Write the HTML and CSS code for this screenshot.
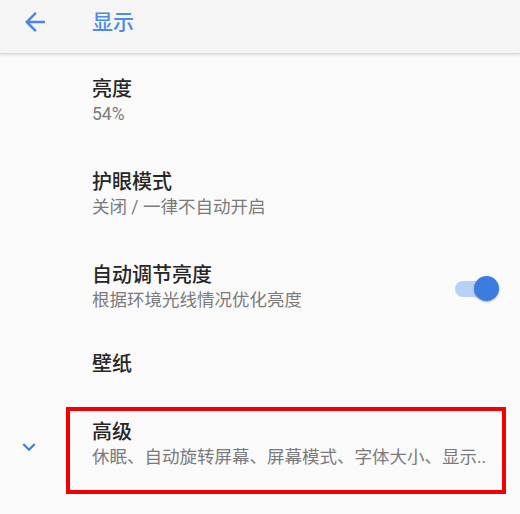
FILE: index.html
```html
<!DOCTYPE html>
<html lang="zh-CN">
<head>
<meta charset="utf-8">
<title>显示</title>
<link rel="stylesheet" href="styles.css">
</head>
<body>
<header class="appbar">
  <svg class="back" viewBox="0 0 24 24" width="30" height="30"><path d="M20 11H7.83l5.59-5.59L12 4l-8 8 8 8 1.41-1.41L7.83 13H20v-2z" fill="currentColor"/></svg>
  <h1 class="appbar-title">显示</h1>
</header>
<main class="list">
  <div class="item">
    <div class="text">
      <div class="title">亮度</div>
      <div class="summary">54%</div>
    </div>
  </div>
  <div class="item">
    <div class="text">
      <div class="title">护眼模式</div>
      <div class="summary">关闭 / 一律不自动开启</div>
    </div>
  </div>
  <div class="item">
    <div class="text">
      <div class="title">自动调节亮度</div>
      <div class="summary">根据环境光线情况优化亮度</div>
    </div>
    <div class="switch"><span class="track"></span><span class="thumb"></span></div>
  </div>
  <div class="item single">
    <div class="text">
      <div class="title">壁纸</div>
    </div>
  </div>
  <div class="item advanced">
    <div class="icon-col">
      <svg class="chevron" viewBox="0 0 24 24" width="26" height="26"><path d="M16.59 8.59L12 13.17 7.41 8.59 6 10l6 6 6-6z" fill="currentColor"/></svg>
    </div>
    <div class="text">
      <div class="title">高级</div>
      <div class="summary">休眠、自动旋转屏幕、屏幕模式、字体大小、显示..</div>
    </div>
    <div class="highlight"></div>
  </div>
</main>
</body>
</html>
```
FILE: styles.css
```css
html, body {
  margin: 0;
  padding: 0;
}
body {
  background: #fafafa;
  font-family: Roboto, "Noto Sans CJK SC", sans-serif;
  width: 520px;
  height: 514px;
  overflow: hidden;
}
.appbar {
  position: relative;
  height: 53px;
  background: #f5f5f5;
  display: flex;
  align-items: center;
  box-shadow: 0 1px 0 #dcdcdc, 0 2px 3px rgba(0, 0, 0, 0.12);
}
.back {
  color: #4a86e6;
  margin-left: 20px;
  margin-top: -9px;
  display: block;
}
.appbar-title {
  margin: 0 0 0 42px;
  margin-top: -9px;
  font-size: 21px;
  font-weight: 500;
  color: #4d8be6;
  line-height: 28px;
}
.list {
  display: flex;
  flex-direction: column;
}
.item {
  position: relative;
  display: flex;
  align-items: center;
  padding: 24px 0 19px 92px;
}
.item.single {
  padding-top: 20px;
  padding-bottom: 20px;
}
.text {
  flex: 1;
  min-width: 0;
}
.title {
  font-size: 20px;
  line-height: 24px;
  font-weight: 500;
  color: #262626;
}
.summary {
  font-size: 17.5px;
  line-height: 26px;
  color: #7a7a7a;
  white-space: nowrap;
}
.switch {
  position: relative;
  width: 44px;
  height: 26px;
  margin-right: 21px;
  margin-top: 2px;
}
.track {
  position: absolute;
  left: 0;
  top: 5px;
  width: 42px;
  height: 16px;
  border-radius: 8px;
  background: #b7d0f5;
}
.thumb {
  position: absolute;
  right: 0;
  top: 0;
  width: 25px;
  height: 25px;
  border-radius: 50%;
  background: #3a7ce0;
  box-shadow: 0 1px 2px rgba(0, 0, 0, 0.3);
}
.item.advanced {
  padding-left: 0;
}
.icon-col {
  width: 92px;
  flex: none;
  display: flex;
  padding-left: 16px;
  box-sizing: border-box;
}
.chevron {
  color: #3d7fe0;
  display: block;
  margin-top: 4px;
}
.highlight {
  position: absolute;
  left: 66px;
  top: 11px;
  width: 440px;
  height: 87px;
  box-sizing: border-box;
  border: 4px solid #f20000;
  pointer-events: none;
}
```
